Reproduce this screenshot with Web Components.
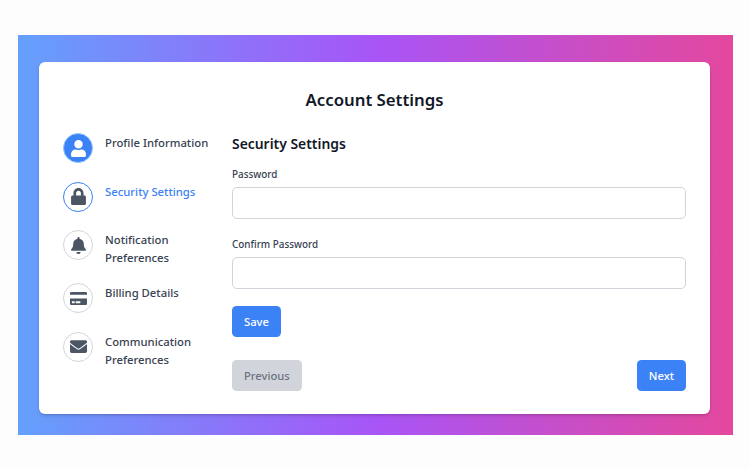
<!DOCTYPE html>
<html>
<head>
<meta charset="utf-8">
<title>Account Settings</title>
<style>
  html, body { margin: 0; height: 100%; background: #fdfdfd; }
  body { font-family: "Noto Sans", sans-serif; overflow: hidden; }
</style>
</head>
<body>
<settings-page>
  <h-title slot="title">Account Settings</h-title>
  <step-item slot="steps" icon="user" state="done">Profile Information</step-item>
  <step-item slot="steps" icon="lock" state="active">Security Settings</step-item>
  <step-item slot="steps" icon="bell">Notification Preferences</step-item>
  <step-item slot="steps" icon="card">Billing Details</step-item>
  <step-item slot="steps" icon="mail">Communication Preferences</step-item>

  <section-title>Security Settings</section-title>
  <form-field label="Password"></form-field>
  <form-field label="Confirm Password"></form-field>
  <ui-button variant="primary">Save</ui-button>
  <nav-row>
    <ui-button slot="left" variant="muted">Previous</ui-button>
    <ui-button slot="right" variant="primary">Next</ui-button>
  </nav-row>
</settings-page>

<script>
const ICONS = {
  user: ["0 0 448 512", "M224 256c70.7 0 128-57.3 128-128S294.7 0 224 0 96 57.3 96 128s57.3 128 128 128zm89.6 32h-16.7c-22.2 10.2-46.9 16-72.9 16s-50.6-5.8-72.9-16h-16.7C60.2 288 0 348.2 0 422.4V464c0 26.5 21.5 48 48 48h352c26.5 0 48-21.5 48-48v-41.6c0-74.2-60.2-134.4-134.4-134.4z"],
  lock: ["0 0 448 512", "M400 224h-24v-72C376 68.2 307.8 0 224 0S72 68.2 72 152v72H48c-26.5 0-48 21.5-48 48v192c0 26.5 21.5 48 48 48h352c26.5 0 48-21.5 48-48V272c0-26.5-21.5-48-48-48zm-104 0H152v-72c0-39.7 32.3-72 72-72s72 32.3 72 72v72z"],
  bell: ["0 0 448 512", "M224 512c35.32 0 63.97-28.65 63.97-64H160.03c0 35.35 28.65 64 63.97 64zm215.39-149.71c-19.32-20.76-55.47-51.99-55.47-154.29 0-77.7-54.48-139.9-127.94-155.16V32c0-17.67-14.32-32-31.98-32s-31.98 14.33-31.98 32v20.84C118.56 68.1 64.08 130.3 64.08 208c0 102.3-36.15 133.53-55.47 154.29-6 6.45-8.66 14.16-8.61 21.71.11 16.4 12.98 32 32.1 32h383.8c19.12 0 32-15.6 32.1-32 .05-7.55-2.61-15.27-8.61-21.71z"],
  card: ["0 0 576 512", "M0 432c0 26.5 21.5 48 48 48h480c26.5 0 48-21.5 48-48V256H0v176zm192-68c0-6.6 5.4-12 12-12h136c6.6 0 12 5.4 12 12v40c0 6.6-5.4 12-12 12H204c-6.6 0-12-5.4-12-12v-40zm-128 0c0-6.6 5.4-12 12-12h72c6.6 0 12 5.4 12 12v40c0 6.6-5.4 12-12 12H76c-6.6 0-12-5.4-12-12v-40zM576 80v48H0V80c0-26.5 21.5-48 48-48h480c26.5 0 48 21.5 48 48z"],
  mail: ["0 0 512 512", "M502.3 190.8c3.9-3.1 9.7-.2 9.7 4.7V400c0 26.5-21.5 48-48 48H48c-26.5 0-48-21.5-48-48V195.6c0-5 5.7-7.8 9.7-4.7 22.4 17.4 52.1 39.5 154.1 113.6 21.1 15.4 56.7 49.8 92.2 49.6 35.7.3 72-34.8 92.3-49.6 102-74.1 131.6-96.3 154-113.7zM256 320c23.2.4 56.6-29.2 73.4-41.4 132.7-96.3 142.8-104.7 173.4-128.7 5.8-4.5 9.2-11.5 9.2-18.9v-19c0-26.5-21.5-48-48-48H48C21.5 64 0 85.5 0 112v19c0 7.4 3.4 14.3 9.2 18.9 30.6 23.9 40.7 32.4 173.4 128.7 16.8 12.2 50.2 41.8 73.4 41.4z"]
};

// Small helper: every element gets an open shadow root from a string
class ShadowEl extends HTMLElement {
  constructor() {
    super();
    this.attachShadow({ mode: "open" });
  }
}

class SettingsPage extends ShadowEl {
  connectedCallback() {
    this.shadowRoot.innerHTML = `
      <style>
        :host { display: block; padding: 34.5px 17px 35px 17.5px; }
        .gradient {
          height: 400px;
          box-sizing: border-box;
          padding: 27.5px 23px 20px 21.5px;
          background: linear-gradient(90deg, #64a0fc, #a855f7 50%, #e4489e);
        }
        .card {
          height: 352px;
          box-sizing: border-box;
          padding: 24px 24px 0 24px;
          background: #fff;
          border-radius: 6px;
          box-shadow: 0 2px 4px -1px rgba(0,0,0,.18), 0 1px 2px rgba(0,0,0,.08);
        }
        .columns { display: flex; margin-top: 20px; }
        .steps { width: 169px; flex: none; display: flex; flex-direction: column; }
        .main { flex: 1; min-width: 0; }
      </style>
      <div class="gradient">
        <div class="card">
          <slot name="title"></slot>
          <div class="columns">
            <div class="steps"><slot name="steps"></slot></div>
            <div class="main"><slot></slot></div>
          </div>
        </div>
      </div>`;
  }
}

class HTitle extends ShadowEl {
  connectedCallback() {
    this.shadowRoot.innerHTML = `
      <style>
        :host { display: block; text-align: center; font-size: 16.8px; line-height: 27px; font-weight: 600; color: #111827; }
      </style>
      <slot></slot>`;
  }
}

class StepItem extends ShadowEl {
  connectedCallback() {
    const icon = ICONS[this.getAttribute("icon")];
    this.shadowRoot.innerHTML = `
      <style>
        :host { display: flex; gap: 12px; min-height: 32.5px; padding-bottom: 16px; font-size: 11.3px; line-height: 18px; font-weight: 500; color: #374151; }
        .circle {
          width: 30px; height: 30px; flex: none; box-sizing: border-box;
          display: flex; align-items: center; justify-content: center;
          border-radius: 50%; border: 1.5px solid #d1d5db; background: #fff; color: #4b5563;
        }
        svg { height: 17px; width: 17px; fill: currentColor; display: block; }
        .label { padding-top: 1px; }
        :host([state="active"]) { color: #3b82f6; }
        :host([state="active"]) .circle { border-color: #3b82f6; }
        :host([state="done"]) .circle { border-color: #93c5fd; background: #3b82f6; color: #fff; }
      </style>
      <div class="circle"><svg viewBox="${icon[0]}"><path d="${icon[1]}"/></svg></div>
      <div class="label"><slot></slot></div>`;
  }
}

class SectionTitle extends ShadowEl {
  connectedCallback() {
    this.shadowRoot.innerHTML = `
      <style>
        :host { display: block; font-size: 13.9px; line-height: 22px; font-weight: 600; color: #111827; margin-bottom: 11px; }
      </style>
      <slot></slot>`;
  }
}

class FormField extends ShadowEl {
  connectedCallback() {
    this.shadowRoot.innerHTML = `
      <style>
        :host { display: block; margin-bottom: 17px; }
        label { display: block; font-size: 9.9px; line-height: 16px; font-weight: 500; color: #374151; margin-bottom: 5px; }
        input { display: block; box-sizing: border-box; width: 100%; height: 32px; border: 1px solid #d1d5db; border-radius: 5px; background: #fff; }
      </style>
      <label>${this.getAttribute("label")}</label>
      <input type="password">`;
  }
}

class UiButton extends ShadowEl {
  connectedCallback() {
    this.shadowRoot.innerHTML = `
      <style>
        :host { display: inline-flex; align-items: center; height: 31px; box-sizing: border-box; padding: 0 12px; border-radius: 4.5px; font-size: 11.2px; font-weight: 500; }
        :host([variant="primary"]) { background: #3b82f6; color: #fff; }
        :host([variant="muted"]) { background: #d1d5db; color: #6b7280; }
      </style>
      <slot></slot>`;
  }
}

class NavRow extends ShadowEl {
  connectedCallback() {
    this.shadowRoot.innerHTML = `
      <style>
        :host { display: flex; justify-content: space-between; margin-top: 23px; }
      </style>
      <slot name="left"></slot>
      <slot name="right"></slot>`;
  }
}

customElements.define("settings-page", SettingsPage);
customElements.define("h-title", HTitle);
customElements.define("step-item", StepItem);
customElements.define("section-title", SectionTitle);
customElements.define("form-field", FormField);
customElements.define("ui-button", UiButton);
customElements.define("nav-row", NavRow);
</script>
</body>
</html>
